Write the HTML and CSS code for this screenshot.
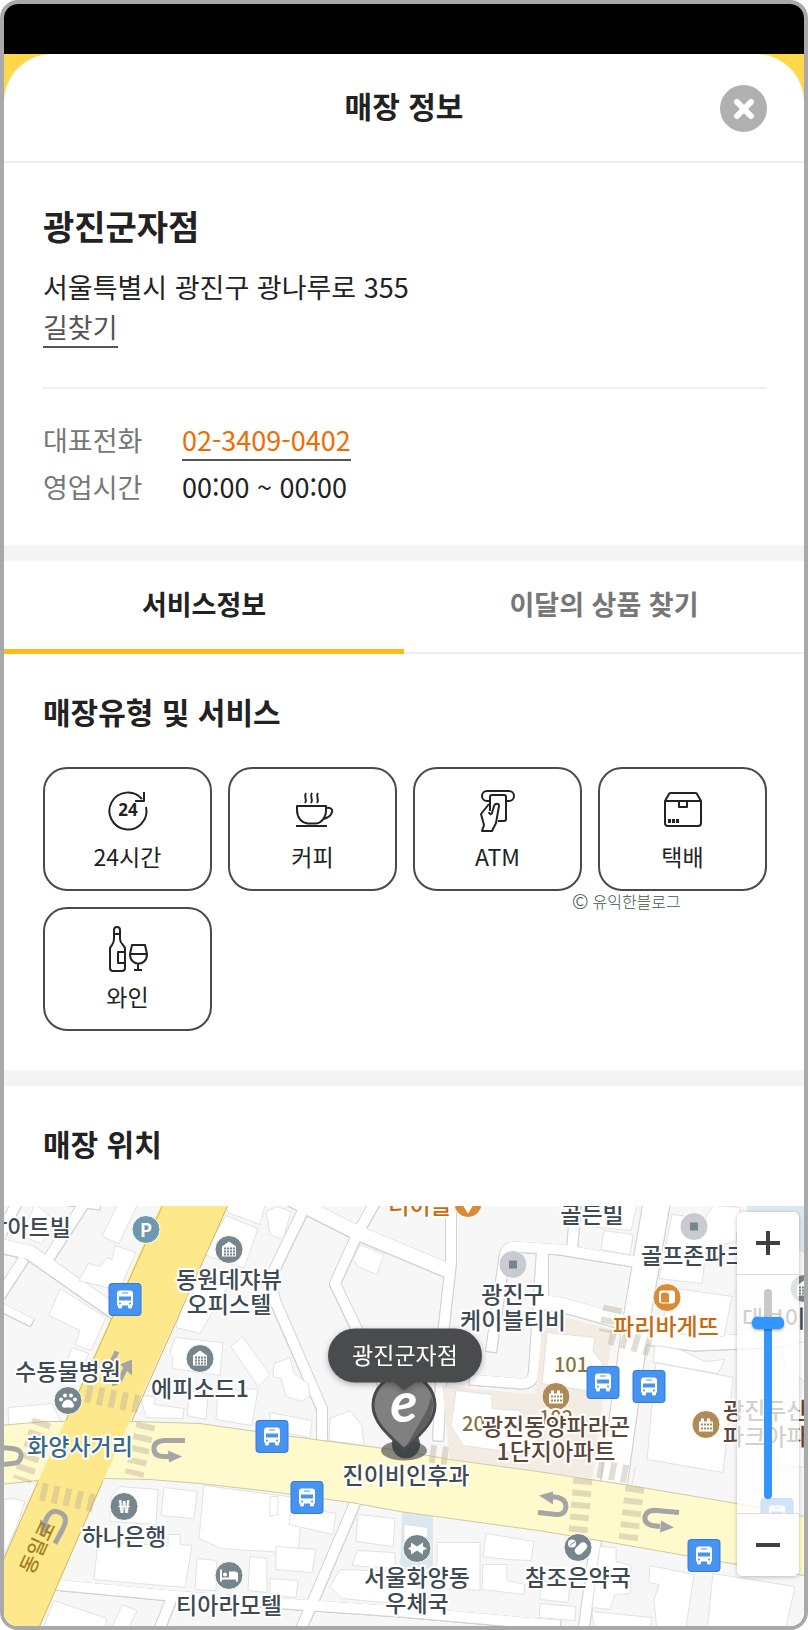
FILE: index.html
```html
<!DOCTYPE html>
<html lang="ko">
<head>
    <meta charset="UTF-8">
    <meta name="viewport" content="width=device-width, initial-scale=1.0">
    <title>매장 정보</title>
    <link rel="stylesheet" href="styles.css">
</head>
<body>
    <div class="phone">
        <div class="status-bar"></div>
        <div class="sheet-wrapper">
            <main class="sheet">
                <header class="sheet-header">
                    <h1>매장 정보</h1>
                    <button class="close" aria-label="닫기">
                        <svg width="22" height="22" viewBox="0 0 22 22"><path d="M4 4L18 18M18 4L4 18" stroke="#fff" stroke-width="6" stroke-linecap="round"/></svg>
                    </button>
                </header>

                <!-- 매장 기본 정보 -->
                <section class="store">
                    <h2>광진군자점</h2>
                    <p>서울특별시 광진구 광나루로 355</p>
                    <a class="route" href="#map">길찾기</a>
                    <dl class="contact">
                        <dt>대표전화</dt>
                        <dd><a class="tel" href="tel:02-3409-0402">02-3409-0402</a></dd>
                        <dt>영업시간</dt>
                        <dd>00:00 ~ 00:00</dd>
                    </dl>
                </section>

                <nav class="tabs">
                    <button class="active">서비스정보</button>
                    <button>이달의 상품 찾기</button>
                </nav>

                <!-- 서비스 목록 -->
                <section class="service">
                    <h3>매장유형 및 서비스</h3>
                    <ul class="service-list">
                        <li>
                            <svg viewBox="0 0 48 48">
                                <path d="M42 21A18.500 18.500 0 1 1 38 13"/>
                                <path d="M40 6v9h-9"/>
                                <text x="24" y="30">24</text>
                            </svg>
                            <span>24시간</span>
                        </li>
                        <li>
                            <svg viewBox="0 0 48 48">
                                <path d="M8 20h29v4c0 8-5 13-10 13.500h-8C12 37 8 31 8 24z"/>
                                <path d="M37 22c4-1 7 1 6 4-1 4-4 6-9 7M7 40h31"/>
                                <path d="M17 7c-3 4 2 6-1 10M23 7c-3 4 2 6-1 10M29 7c-3 4 2 6-1 10"/>
                            </svg>
                            <span>커피</span>
                        </li>
                        <li>
                            <svg viewBox="0 0 48 48">
                                <path d="M15 15h-2a5 5 0 0 1 0-10h22a5 5 0 0 1 0 10h-3"/>
                                <path d="M16 25V11q0-2 2-2h12q2 0 2 2v22q0 2-2 2h-6"/>
                                <path d="M15 18l-8 10 3 11-2 6h10l4-8 3-17c0-3-4-3-5 0l-2 7c-1 2-3 1-3-1"/>
                            </svg>
                            <span>ATM</span>
                        </li>
                        <li>
                            <svg viewBox="0 0 48 48">
                                <path d="M6 15l4-7q0-1 2-1h24q2 0 2 1l4 7v22q0 3-3 3H9q-3 0-3-3zM6 15h36M20 15v6h8v-6"/>
                                <path class="solid" d="M9 33h3v4H9zM13 33h3v4h-3zM17 33h3v4h-3z"/>
                            </svg>
                            <span>택배</span>
                        </li>
                        <li>
                            <svg viewBox="0 0 48 48">
                                <path d="M10 4q0-3 3-3t3 3v9q0 3 3 6 2 2 2 4v19q0 3-3 3H9q-3 0-3-3V23q0-2 2-4 2-3 2-6zM10 8h6M21 26h-7v11h7"/>
                                <path d="M28 19h13l2 9c0 13-17 13-17 0zM26 28h17M34 38v6M30 44h8"/>
                            </svg>
                            <span>와인</span>
                        </li>
                    </ul>
                    <small class="copyright"><span>©</span> 유익한블로그</small>
                </section>

                <section class="location">
                    <h3>매장 위치</h3>
                </section>
                <div class="map" id="map">
                    <svg class="map-canvas" viewBox="4 1205 800 421" preserveAspectRatio="xMidYMid slice">
                        <defs>
                            <g id="bus">
                                <rect x="-16" y="-16" width="32" height="32" rx="3" fill="#4793f0" stroke="#3479d4"/>
                                <path fill="#fff" d="M-8-6q0-3 3-3H5q3 0 3 3V6H7v2q0 1-2 1T3 8V6H-3v2q0 1-2 1t-2-1V6h-1z"/>
                                <path fill="#4793f0" d="M-6-3H6v4H-6zM-3-7h6v1h-6z"/>
                                <circle cx="-5" cy="4" r="1" fill="#4793f0"/><circle cx="5" cy="4" r="1" fill="#4793f0"/>
                            </g>
                            <g id="house">
                                <path d="M-7-3L0-8 7-3V7H-7z" fill="#fff"/>
                                <path d="M-5-1H6M-5 2H6M-5 5H6" stroke="#76868c" stroke-width="2" stroke-dasharray="2 1"/>
                            </g>
                            <g id="apt">
                                <path d="M-7 7V-3h2v-3h3v3h3v-3h3v3h3V7z" fill="#fff"/>
                                <path d="M-5 0H6M-5 4H6" stroke="#b08b55" stroke-width="2" stroke-dasharray="2 1"/>
                            </g>
                            <!-- 골목길: 테두리용과 채움용으로 두 번 사용 -->
                            <g id="lanes" fill="none" stroke-linejoin="round">
                                <path class="w14" d="M0 1245L30 1252 120 1315M290 1198L355 1231 448 1270M640 1336L695 1343 810 1338M535 1300L565 1305 625 1322"/>
                                <path class="w10" d="M86 1200L46 1262M24 1258L0 1295M18 1200L0 1235M376 1200L358 1232 335 1283 392 1402M451 1200V1262L444 1325 438 1440M491 1351L505 1253Q507 1247 514 1246L560 1249 640 1262M542 1250L534 1372Q532 1384 520 1383L470 1379M576 1200L572 1250M543 1252V1300"/>
                                <path class="w10" d="M304 1208L270 1278 275 1300 322 1408V1440M54 1584L170 1595 270 1602 400 1611 560 1625M172 1597L155 1640M356 1500L312 1603 298 1635M596 1540L582 1640"/>
                                <path class="w8" d="M0 1306L32 1322M100 1205L50 1198"/>
                                <path class="w26" d="M657 1200L636 1322 614 1482"/>
                            </g>
                        </defs>

                        <rect x="4" y="1205" width="800" height="421" fill="#f7f7f7"/>
                        <path fill="#dbe8f0" d="M747 1205h57v48l-20-14-37-8zM402 1508l31 4v58h-33z"/>
                        <use href="#lanes" class="lane-edge"/>
                        <use href="#lanes" class="lane-fill"/>
                        <path fill="#f2ece2" d="M442 1385l50 5 43 4 7-64 23-13 48 12-21 149-142-20z"/>

                        <g class="blocks">
                            <path d="M35 1204l-14 31 20 8 16-21-16-14zM117 1205l-15 31 17 7 18-38zM115 1245l21 7-17 38-40-10 9-17 12 3 7-9 5 2zM60 1288l46 29-15 33-16-6 5-14-31-15zM72 1347l17 6-9 17-15-4zM8 1407l44-4 9 18-52 6zM15 1498l10 3-8 24-13 30v-56z"/>
                            <path d="M226 1215l32 13-14 40-40-14zM225 1205h40l-5 19-32-12zM192 1270l36 15-28 48-24-6zM175 1337l48 5-3 33-48-7 1-12-3-3zM242 1336l28 38-12 12-27-40zM277 1206l14 5-8 28-13-5-4-23zM360 1244l24 10-7 20-18-7-6-8z"/>
                            <path d="M274 1363l16-6 4 16 14 10 2 12-8 6-16-5-5-18-8-2zM140 1395l15 1-1 8 30 4-1 10-37-1zM190 1390l18 4-2 25-19-4zM218 1391l40-3-6 37-36-6zM330 1418l20-8 12 15 2 20-35-5zM270 1412l42 8-2 17-40-8z"/>
                            <path d="M604 1230l29 4-3 20-29-5zM590 1205l47-1-6 26-43-4zM672 1214l33 4 8-13 27 2-4 34-30 6-4 36-43-5zM670 1287l62 9-8 40-64-4zM655 1345l25 4 25 12 20-2-7 14-65-11zM656 1362l77 15-10 95-76-13zM547 1332l48 5-2 14 9 11-5 30-55-9zM456 1390l36 4v14l27 2 20 25-6 20-70-10-12-20z"/>
                            <path d="M120 1486l38 3-2 35-46-3 1-25zM164 1487l33 4-3 27-33-3zM204 1485l99 13-5 55-77-5-22-10zM98 1540l70 6v-12h12v10l12 1-7 42-91-8zM197 1558l20 2-1 30-21-1zM250 1556l17 2v34l-19-2zM54 1600l53 18-5 22H38zM122 1604l15 6-14 30-16-2z"/>
                            <path d="M270 1496h8v18l-8 2zM292 1505l44 8-3 21-44-10zM276 1546l40 3-4 23-36-3zM270 1578l28 2-2 17-26-2zM358 1514l37 4-2 28-37-5zM357 1550l38 2v16l-43-3zM340 1569l58 2 30 25-2 10-84-8-12-12zM404 1524l24 3-2 20-22-2zM437 1542h43v48l-43-3zM486 1533l48 8-3 19-23-1-25-3zM483 1564h24v16l18 4-1 10-42-5zM540 1580l30 4-2 18-28-3zM540 1603l36 3-1 14-36-3z"/>
                            <path d="M600 1546l16 1v14l15 4-1 28-15 1-5 15-18-2zM592 1611l60 6-2 14h-55zM650 1565l44 9-10 66h-26l-4-40 5-16-10-2zM713 1573l82 13-12 54h-77zM781 1347l24-6v40l-20-14zM765 1420l20-16 19 3v60l-25-3-20-20z"/>
                        </g>

                        <!-- 큰 도로 -->
                        <path fill="#fefacb" stroke="#cfc9a4" d="M0 1425L45 1421 133 1421 200 1423 270 1433 330 1441 400 1450 450 1459 538 1471 630 1485 737 1503 810 1517V1576L737 1564 605 1541 538 1530 400 1511 351 1502 270 1491 200 1483 150 1479 105 1478 38 1480 0 1484z"/>
                        <path fill="#fee88c" d="M163 1200h67L103 1480 36 1634H0V1567L38 1481z"/>
                        <path fill="none" stroke="#cdb75c" stroke-width="1" d="M163 1204L66 1420M38 1481L0 1567M230 1200L132 1420M103 1480L36 1634"/>

                        <g class="cross">
                            <path stroke-width="18" d="M86 1393L140 1404M41 1491L95 1503M598 1468L634 1475M610 1335L655 1348M430 1453L452 1456"/>
                            <path stroke-width="19" d="M146 1423L134 1475M583 1478L578 1532M635 1486L628 1540M42 1420L22 1480M613 1306L608 1332"/>
                        </g>
                        <g class="turns">
                            <path d="M185 1440H166q-12 0-12 8t10 8h6M0 1447l12 1q10 1 9 8-1 7-9 7l-8 1M55 1543l8-15q6-12-3-16-8-4-13 5l-4 9M538 1512l18 2q9 1 10-8 0-7-8-9l-8-1M679 1512l-22-2q-10-1-12 6-1 7 7 9l8 1"/>
                            <path d="M117 1351l-7 14M112 1383q8 0 10-8l4-8"/>
                            <path class="solid" d="M168 1450l14 6-13 6zM40 1519l12 6-11 10zM553 1491l-14 4 14 9zM661 1520l13 7-14 5zM120 1364l12-5v16z"/>
                        </g>

                        <g class="pois">
                            <circle cx="146" cy="1229" r="14" fill="#6e98ad"/>
                            <circle cx="229" cy="1249" r="14"/>
                            <circle cx="200" cy="1358" r="14"/>
                            <circle cx="68" cy="1400" r="14"/>
                            <circle cx="124" cy="1506" r="14"/>
                            <circle cx="229" cy="1575" r="14"/>
                            <circle cx="417" cy="1548" r="14"/>
                            <circle cx="578" cy="1547" r="14"/>
                            <circle cx="804" cy="1288" r="14"/>
                            <circle cx="513" cy="1264" r="14" fill="#c9cbd0"/>
                            <circle cx="694" cy="1226" r="14" fill="#c9cbd0"/>
                            <circle cx="667" cy="1297" r="14" fill="#d98b35"/>
                            <circle cx="468" cy="1203" r="14" fill="#d98b35"/>
                            <circle cx="556" cy="1396" r="14" fill="#b08b55"/>
                            <circle cx="706" cy="1424" r="14" fill="#b08b55"/>
                        </g>
                        <use href="#house" x="229" y="1249"/>
                        <use href="#house" x="200" y="1358"/>
                        <use href="#house" x="804" y="1288"/>
                        <use href="#apt" x="556" y="1396"/>
                        <use href="#apt" x="706" y="1424"/>
                        <path fill="#76868c" d="M509 1260h8v8h-8zM690 1222h8v8h-8z"/>
                        <g fill="#fff">
                            <text class="sign" x="146" y="1236">P</text>
                            <text class="sign" x="124" y="1512">₩</text>
                            <path d="M68 1399c3 0 6 4 6 6 0 3-3 2-6 2s-6 1-6-2c0-2 3-6 6-6z"/>
                            <circle cx="61" cy="1399" r="2"/><circle cx="65" cy="1395" r="2"/><circle cx="71" cy="1395" r="2"/><circle cx="75" cy="1399" r="2"/>
                            <path d="M220 1569h2v8h7v-6h6q3 0 3 3v7h-2v-2h-14v2h-2zM223 1574a2 2 0 1 0 4 0 2 2 0 1 0-4 0z"/>
                            <path d="M411 1542l6 4 6-4v4l4 2-4 2v4l-6-4-6 4v-4l-3-2 3-2z"/>
                            <circle cx="572" cy="1543" r="4"/>
                            <rect x="-7" y="-4" width="14" height="8" rx="4" transform="translate(581 1548) rotate(-45)"/>
                            <rect x="659" y="1290" width="16" height="13" rx="3"/>
                            <path d="M463 1205h10l-5 8z"/>
                        </g>
                        <path d="M570 1545l5-4" stroke="#76868c" stroke-width="1"/>
                        <path d="M661 1294q0-2 4-2t4 2v8h-8z" fill="#d98b35"/>

                        <g class="names">
                            <text class="right" x="71" y="1235">랑아트빌</text>
                            <text x="229" y="1287">동원데쟈뷰</text>
                            <text x="229" y="1312">오피스텔</text>
                            <text x="200" y="1396">에피소드1</text>
                            <text x="68" y="1379">수동물병원</text>
                            <text class="blue" x="80" y="1454">화양사거리</text>
                            <text x="124" y="1544">하나은행</text>
                            <text x="229" y="1613">티아라모텔</text>
                            <text x="417" y="1585">서울화양동</text>
                            <text x="417" y="1611">우체국</text>
                            <text x="578" y="1585">참조은약국</text>
                            <text x="592" y="1222">골든빌</text>
                            <text class="left" x="641" y="1263">골프존파크</text>
                            <text x="513" y="1302">광진구</text>
                            <text x="513" y="1328">케이블티비</text>
                            <text class="orange" x="666" y="1334">파리바게뜨</text>
                            <text class="orange" x="420" y="1213">더이블</text>
                            <text class="gold" x="571" y="1371">101</text>
                            <text class="gold" x="556" y="1424">102</text>
                            <text class="gold left" x="462" y="1430">201</text>
                            <text class="brown" x="556" y="1434">광진동양파라곤</text>
                            <text class="brown" x="556" y="1459">1단지아파트</text>
                            <text class="brown left" x="723" y="1418">광진두산</text>
                            <text class="brown left" x="723" y="1444">파크아파트</text>
                            <text class="left" x="742" y="1326">대브이빌</text>
                            <text class="road" transform="translate(44 1550) rotate(-65)">동일로</text>
                        </g>

                        <use href="#bus" x="125" y="1299"/>
                        <use href="#bus" x="272" y="1436"/>
                        <use href="#bus" x="307" y="1497"/>
                        <use href="#bus" x="603" y="1382"/>
                        <use href="#bus" x="649" y="1386"/>
                        <use href="#bus" x="704" y="1555"/>
                        <use href="#bus" x="777" y="1514"/>

                        <!-- 매장 마커 -->
                        <circle cx="406" cy="1444" r="14" fill="#4a565c"/>
                        <ellipse cx="404" cy="1450" rx="23" ry="10" fill="#3c3c3c" opacity=".6"/>
                        <path fill="#808080" stroke="#4a4a4a" stroke-width="3" d="M404 1449C389 1435 373 1422 373 1405a31 31 0 0 1 62 0C435 1422 419 1435 404 1449z"/>
                        <path fill="#5f5f5f" d="M406 1446q24-22 25-32 4-12 0-18-3 14-10 24z"/>
                        <text class="emart" x="404" y="1421">e</text>
                        <g class="names"><text x="406" y="1483">진이비인후과</text></g>
                        <g class="bubble">
                            <rect x="328" y="1328" width="154" height="54" rx="27"/>
                            <path d="M393 1381h23l-12 9z"/>
                            <text x="405" y="1363">광진군자점</text>
                        </g>
                    </svg>
                    <div class="zoom">
                        <button aria-label="확대"><svg width="24" height="24"><path d="M12 0V24M0 12H24" stroke="#3f4042" stroke-width="4"/></svg></button>
                        <label class="level"><input type="range" min="0" max="100" value="86" aria-label="지도 배율"></label>
                        <button aria-label="축소"><svg width="24" height="24"><path d="M0 12H24" stroke="#3f4042" stroke-width="4"/></svg></button>
                    </div>
                </div>
            </main>
        </div>
    </div>
</body>
</html>
```
FILE: styles.css
```css
* {
    box-sizing: border-box;
    margin: 0;
    padding: 0;
}
body {
    background-color: #fff;
    color: #222;
    font-family: "Noto Sans CJK KR", sans-serif;
    font-size: 27px;
    line-height: 40px;
}
button {
    border: none;
    background: none;
    font-family: inherit;
    cursor: pointer;
}
a {
    text-decoration: none;
}
ul {
    list-style: none;
}

.phone {
    display: flex;
    flex-direction: column;
    min-height: 100vh;
    border: 4px solid #a9a9a9;
    border-radius: 18px;
    overflow: hidden;
}
.status-bar {
    height: 50px;
    background-color: #000;
}
.sheet-wrapper {
    display: flex;
    flex: 1;
    background: linear-gradient(#ffd74b 60px, #fff 60px);
}
.sheet {
    display: flex;
    flex-direction: column;
    flex: 1;
    min-width: 0;
    background-color: #fff;
    border-radius: 48px 48px 0 0;
}

/* 상단 제목 */
.sheet-header {
    position: relative;
    display: flex;
    justify-content: center;
    align-items: center;
    height: 109px;
    padding-bottom: 5px;
    border-bottom: 2px solid #eee;
}
h1,
h3 {
    font-size: 30px;
    line-height: 44px;
    font-weight: bold;
}
.close {
    position: absolute;
    right: 37px;
    top: 31px;
    display: flex;
    justify-content: center;
    align-items: center;
    width: 47px;
    height: 47px;
    border-radius: 50%;
    background-color: #b0b0b0;
}

/* 매장 정보 */
.store {
    padding: 38px 37px 38px 39px;
    border-bottom: 16px solid #f4f4f4;
}
.store h2 {
    margin-bottom: 16px;
    font-size: 34px;
    line-height: 50px;
}
.route,
.tel {
    display: inline-block;
    line-height: 38px;
    border-bottom: 2px solid #555;
}
.route {
    color: #555;
}
.tel {
    color: #ef6c00;
}
.contact {
    display: grid;
    grid-template-columns: 139px 1fr;
    row-gap: 6px;
    margin-top: 39px;
    padding-top: 31px;
    border-top: 2px solid #eee;
}
.contact dt {
    color: #777;
}

/* 탭 */
.tabs {
    display: flex;
}
.tabs button {
    flex: 1;
    height: 93px;
    padding-bottom: 6px;
    border-bottom: 2px solid #eee;
    font-size: 27px;
    font-weight: bold;
    color: #777;
}
.tabs .active {
    padding-bottom: 3px;
    border-bottom: 5px solid #fbbc1b;
    color: #222;
}

/* 서비스 */
.service {
    position: relative;
    padding: 35px 37px 39px 39px;
    border-bottom: 16px solid #f4f4f4;
}
.service-list {
    display: grid;
    grid-template-columns: repeat(4, 1fr);
    gap: 16px;
    margin-top: 34px;
}
.service-list li {
    display: flex;
    flex-direction: column;
    align-items: center;
    height: 124px;
    padding-top: 17px;
    border: 2px solid #4a4a4a;
    border-radius: 24px;
    font-size: 23px;
    line-height: 44px;
}
.service-list svg {
    width: 48px;
    height: 48px;
    fill: none;
    stroke: #222;
    stroke-width: 2;
    stroke-linejoin: round;
}
.service-list .solid {
    fill: #222;
    stroke: none;
}
.service-list text {
    fill: #222;
    stroke: none;
    font-family: "Open Sans", sans-serif;
    font-size: 17px;
    font-weight: bold;
    text-anchor: middle;
}
.copyright {
    position: absolute;
    left: 568px;
    top: 235px;
    display: flex;
    align-items: center;
    gap: 4px;
    font-size: 16px;
    font-weight: 300;
    line-height: 24px;
    color: #3c5a3f;
}
.copyright span {
    font-size: 20px;
}

/* 지도 */
.location {
    padding: 35px 39px 41px;
}
.map {
    position: relative;
    flex: 1;
    min-height: 420px;
    overflow: hidden;
}
.map-canvas {
    position: absolute;
    width: 100%;
    height: 100%;
}
.lane-fill { stroke: #fff; }
.w8 { stroke-width: 8px; }
.w10 { stroke-width: 10px; }
.w14 { stroke-width: 14px; }
.w26 { stroke-width: 26px; }
.lane-edge {
    stroke: #d2d2d2;
    filter: drop-shadow(1px 0 0 #d2d2d2) drop-shadow(-1px 0 0 #d2d2d2) drop-shadow(0 1px 0 #d2d2d2);
}
.blocks {
    fill: #fff;
    stroke: #e2e2e2;
}
.cross {
    fill: none;
    stroke: #b9aa99;
    stroke-opacity: .4;
    stroke-dasharray: 6 6;
}
.turns {
    fill: none;
    stroke: #a5a5a5;
    stroke-width: 5;
}
.turns .solid {
    fill: #a5a5a5;
    stroke: none;
}
.pois {
    fill: #76868c;
    stroke: #fff;
}
.sign {
    font-size: 18px;
    font-weight: bold;
    text-anchor: middle;
}
.names {
    fill: #3d4a54;
    stroke: #fff;
    stroke-width: 4;
    stroke-linejoin: round;
    paint-order: stroke;
    font-size: 23px;
    font-weight: 500;
    text-anchor: middle;
}
.names .left { text-anchor: start; }
.names .right { text-anchor: end; }
.names .blue { fill: #34698a; }
.names .orange { fill: #c96a10; }
.names .brown { fill: #5c4638; }
.names .gold {
    fill: #8c733c;
    font-size: 20px;
}
.names .road {
    fill: #a47f20;
    stroke: none;
    font-size: 20px;
}
.emart {
    fill: #fff;
    font-family: Lato, sans-serif;
    font-size: 56px;
    font-style: italic;
    font-weight: bold;
    text-anchor: middle;
}
.bubble {
    fill: #4a4b4d;
    filter: drop-shadow(0 2px 3px rgba(0, 0, 0, .3));
}
.bubble text {
    fill: #fff;
    font-size: 23px;
    text-anchor: middle;
}

/* 확대 축소 */
.zoom {
    position: absolute;
    right: 5px;
    top: 6px;
    width: 62px;
    border-radius: 6px;
    overflow: hidden;
    background-color: rgba(255, 255, 255, .75);
    box-shadow: 0 1px 4px rgba(0, 0, 0, .25);
}
.zoom button {
    display: flex;
    justify-content: center;
    align-items: center;
    width: 100%;
    height: 62px;
    background-color: #fff;
}
.level {
    display: flex;
    justify-content: center;
    padding: 14px 0;
    border-top: 1px solid #ddd;
    border-bottom: 1px solid #ddd;
}
.level input {
    appearance: none;
    writing-mode: vertical-lr;
    direction: rtl;
    width: 32px;
    height: 210px;
    background: none;
}
.level input::-webkit-slider-runnable-track {
    width: 8px;
    height: 210px;
    margin: 0 12px;
    border-radius: 4px;
    background: linear-gradient(#c9c9c9 34px, #3396ff 34px);
}
.level input::-webkit-slider-thumb {
    appearance: none;
    width: 32px;
    height: 12px;
    margin-left: -12px;
    border-radius: 5px;
    background-color: #3396ff;
    box-shadow: 0 1px 3px rgba(0, 0, 0, .4);
}
```
